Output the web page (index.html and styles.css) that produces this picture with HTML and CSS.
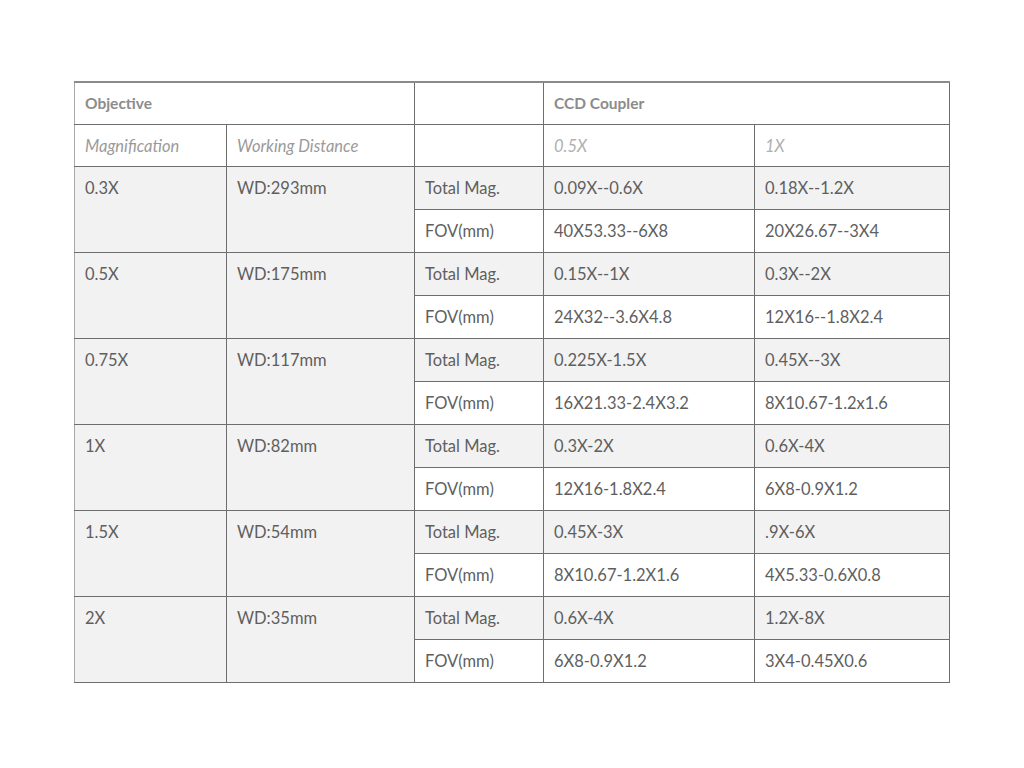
FILE: index.html
```html
<!DOCTYPE html>
<html>
<head>
<meta charset="utf-8">
<link rel="stylesheet" href="styles.css">
</head>
<body>
<div class="page">
<table class="spec">
  <colgroup>
    <col class="c1"><col class="c2"><col class="c3"><col class="c4"><col class="c5">
  </colgroup>
  <thead>
    <tr class="head">
      <th colspan="2" class="first">Objective</th>
      <th></th>
      <th colspan="2" class="light">CCD Coupler</th>
    </tr>
    <tr class="sub">
      <td class="first">Magnification</td>
      <td>Working Distance</td>
      <td></td>
      <td class="light pale">0.5X</td>
      <td class="pale">1X</td>
    </tr>
  </thead>
  <tbody>
    <tr class="alt"><td rowspan="2" class="first">0.3X</td><td rowspan="2">WD:293mm</td><td>Total Mag.</td><td class="light">0.09X--0.6X</td><td>0.18X--1.2X</td></tr>
    <tr><td>FOV(mm)</td><td class="light">40X53.33--6X8</td><td>20X26.67--3X4</td></tr>
    <tr class="alt"><td rowspan="2" class="first">0.5X</td><td rowspan="2">WD:175mm</td><td>Total Mag.</td><td class="light">0.15X--1X</td><td>0.3X--2X</td></tr>
    <tr><td>FOV(mm)</td><td class="light">24X32--3.6X4.8</td><td>12X16--1.8X2.4</td></tr>
    <tr class="alt"><td rowspan="2" class="first">0.75X</td><td rowspan="2">WD:117mm</td><td>Total Mag.</td><td class="light">0.225X-1.5X</td><td>0.45X--3X</td></tr>
    <tr><td>FOV(mm)</td><td class="light">16X21.33-2.4X3.2</td><td>8X10.67-1.2x1.6</td></tr>
    <tr class="alt"><td rowspan="2" class="first">1X</td><td rowspan="2">WD:82mm</td><td>Total Mag.</td><td class="light">0.3X-2X</td><td>0.6X-4X</td></tr>
    <tr><td>FOV(mm)</td><td class="light">12X16-1.8X2.4</td><td>6X8-0.9X1.2</td></tr>
    <tr class="alt"><td rowspan="2" class="first">1.5X</td><td rowspan="2">WD:54mm</td><td>Total Mag.</td><td class="light">0.45X-3X</td><td>.9X-6X</td></tr>
    <tr><td>FOV(mm)</td><td class="light">8X10.67-1.2X1.6</td><td>4X5.33-0.6X0.8</td></tr>
    <tr class="alt"><td rowspan="2" class="first">2X</td><td rowspan="2">WD:35mm</td><td>Total Mag.</td><td class="light">0.6X-4X</td><td>1.2X-8X</td></tr>
    <tr><td>FOV(mm)</td><td class="light">6X8-0.9X1.2</td><td>3X4-0.45X0.6</td></tr>
  </tbody>
</table>
</div>
</body>
</html>
```

FILE: styles.css
```css
html, body {
  margin: 0;
  padding: 0;
  background: #ffffff;
}
body {
  font-family: Lato, "Open Sans", sans-serif;
  color: #5f5f5f;
}
.page {
  padding-top: 81px;
  display: flex;
  justify-content: center;
}
.spec {
  width: 875px;
  border-collapse: collapse;
  table-layout: fixed;
  font-size: 16.5px;
}
.c1 { width: 152px; }
.c2 { width: 188px; }
.c3 { width: 129px; }
.c4 { width: 211px; }
.c5 { width: 195px; }
.spec th, .spec td {
  border: 1px solid #6e6e6e;
  padding: 10px 9px 10px 10px;
  line-height: 22px;
  text-align: left;
  vertical-align: top;
  white-space: nowrap;
}
.spec tr.head th {
  border-top: 2px solid #8a8a8a;
  font-weight: 700;
  font-size: 15.5px;
  color: #8c8c8c;
  padding-top: 9px;
  padding-bottom: 10px;
}
.spec tr.sub td {
  font-style: italic;
  color: #9a9a9a;
  padding-top: 10px;
  padding-bottom: 9px;
}
.spec tr.sub td.pale {
  color: #b0b0b0;
}
.spec .first {
  border-left: 1px solid #a8a8a8;
}
.spec .light {
  border-left: 1px solid #c4c4c4;
}
.spec tr.alt td {
  background: #f2f2f2;
}
```
